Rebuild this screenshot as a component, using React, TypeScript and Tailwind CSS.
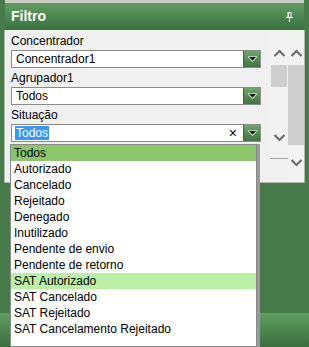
const items = [
  'Todos',
  'Autorizado',
  'Cancelado',
  'Rejeitado',
  'Denegado',
  'Inutilizado',
  'Pendente de envio',
  'Pendente de retorno',
  'SAT Autorizado',
  'SAT Cancelado',
  'SAT Rejeitado',
  'SAT Cancelamento Rejeitado',
];

function DropButton() {
  return (
    <div className="w-[17px] h-full bg-gradient-to-b from-[#6aa86c] to-[#3f7442] flex items-center justify-center border-l border-[#3a6a3c]">
      <svg width="11" height="8" viewBox="0 0 11 8">
        <path d="M0.5 1.5 L10.5 1.5 L5.5 7 Z" fill="#fff" />
        <path d="M2 2 L9 2 L5.5 5.8 Z" fill="#000" />
      </svg>
    </div>
  );
}

function Combo({ value, selected }: { value: string; selected?: boolean }) {
  return (
    <div className="flex h-[18px] w-[250px] border border-[#8a8a8a] bg-white">
      <div className="flex-1 flex items-center pl-[3px] pr-[6px]">
        {selected ? (
          <span className="bg-[#3399ff] text-white px-[1px] leading-[14px]">{value}</span>
        ) : (
          <span className="px-[1px] leading-[14px]">{value}</span>
        )}
        {selected && <span className="ml-auto text-[14px] leading-[14px]">×</span>}
      </div>
      <DropButton />
    </div>
  );
}

function Chevron({ up }: { up?: boolean }) {
  return (
    <svg width="13" height="8" viewBox="0 0 13 8">
      <path d={up ? 'M1.5 7 L6.5 2 L11.5 7' : 'M1.5 1 L6.5 6 L11.5 1'} stroke="#6e6e6e" strokeWidth="2.2" fill="none" />
    </svg>
  );
}

export default function App() {
  return (
    <div
      className="relative w-[309px] h-[347px] bg-[#477b49] flex flex-col overflow-hidden text-[12px] text-black"
      style={{ fontFamily: '"Liberation Sans", Arial, sans-serif' }}
    >
      <div className="mx-[5px] border-t-[3px] border-[#c9c9c9]">
        <div className="h-[27px] bg-gradient-to-b from-[#5d9f61] to-[#3c6f3f] flex items-center justify-between pl-[6px] pr-[10px]">
          <span className="text-white font-bold text-[14px]">Filtro</span>
          <svg width="9" height="12" viewBox="0 0 9 12">
            <path d="M2.5 1 H6.5 V6 H8 V7 H1 V6 H2.5 Z M4 2 V6 H5.5 V2 Z M4 7 H5 V11 H4 Z" fill="#fff" />
          </svg>
        </div>
      </div>
      <div className="mx-[4px] h-[153px] bg-[#f0f0f0] border border-t-0 border-[#b5b5b5] flex">
        <div className="w-[265px] pl-[6px] pt-[4px] flex flex-col">
          <div className="leading-[14px]">Concentrador</div>
          <div className="mt-[2px]"><Combo value="Concentrador1" /></div>
          <div className="mt-[3px] leading-[14px]">Agrupador1</div>
          <div className="mt-[2px]"><Combo value="Todos" /></div>
          <div className="mt-[3px] leading-[14px]">Situação</div>
          <div className="mt-[2px]"><Combo value="Todos" selected /></div>
        </div>
        <div className="w-[18px] h-[129px] bg-[#f2f2f2] border-b border-[#a8a8a8] flex flex-col items-center pt-[19px]">
          <Chevron up />
          <div className="mt-[8px] w-[16px] h-[22px] bg-[#cdcdcd]" />
          <div className="mt-[47px]"><Chevron /></div>
        </div>
        <div className="w-[16px] h-full bg-[#f2f2f2] flex flex-col items-center pt-[19px]">
          <Chevron up />
          <div className="mt-[8px] w-[16px] h-[80px] bg-[#cdcdcd]" />
          <div className="mt-[14px]"><Chevron /></div>
        </div>
      </div>
      <div className="flex-1" />
      <div className="h-[34px] bg-gradient-to-b from-[#5d9f61] to-[#3c6f3f]" />

      <div className="absolute left-[10px] top-[144px] w-[247px] h-[203px] bg-white border border-[#8a8a8a] shadow-[3px_0_0_#9a9a9a]">
        {items.map((it, i) => (
          <div
            key={it}
            className={`h-[16px] leading-[16px] pl-[3px] ${i === 0 ? 'bg-[#8cc56b]' : ''} ${i === 8 ? 'bg-[#b9f0a3]' : ''}`}
          >
            {it}
          </div>
        ))}
      </div>
    </div>
  );
}
